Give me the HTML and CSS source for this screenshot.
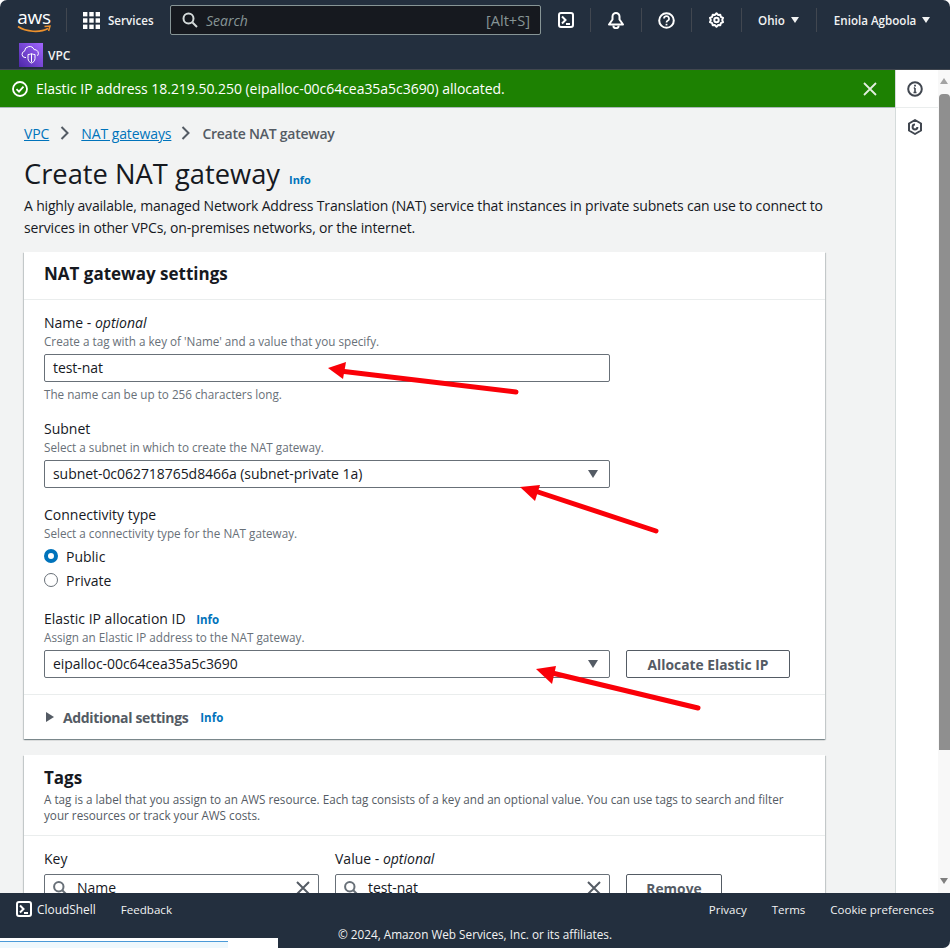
FILE: index.html
```html
<!DOCTYPE html>
<html lang="en">
<head>
<meta charset="utf-8">
<title>Create NAT gateway</title>
<link rel="stylesheet" href="styles.css">
</head>
<body>
<div class="page">
  <header class="topbar">
    <div class="row-main">
      <div class="logo">
        <span class="logo-text">aws</span>
        <svg class="logo-swoosh" width="34" height="9" viewBox="0 0 34 9"><path d="M1 1.500C9 7 23 8 31 3.500" fill="none" stroke="#ec912d" stroke-width="1.700"/><path d="M27.500 1.600 33 1 31.600 6" fill="none" stroke="#ec912d" stroke-width="1.500"/></svg>
      </div>
      <span class="vsep sep-logo"></span>
      <div class="services">
        <svg class="grid-ico" width="17" height="17" viewBox="0 0 17 17" fill="#fff"><rect width="4.400" height="4.400"/><rect x="6.300" width="4.400" height="4.400"/><rect x="12.600" width="4.400" height="4.400"/><rect y="6.300" width="4.400" height="4.400"/><rect x="6.300" y="6.300" width="4.400" height="4.400"/><rect x="12.600" y="6.300" width="4.400" height="4.400"/><rect y="12.600" width="4.400" height="4.400"/><rect x="6.300" y="12.600" width="4.400" height="4.400"/><rect x="12.600" y="12.600" width="4.400" height="4.400"/></svg>
        <span class="nav-text">Services</span>
      </div>
      <div class="search">
        <svg width="16" height="16" viewBox="0 0 16 16" fill="none" stroke="#d5dbdb" stroke-width="2"><circle cx="6.500" cy="6.500" r="5"/><path d="M10.500 10.500 15 15"/></svg>
        <span class="search-text">Search</span>
        <span class="search-key">[Alt+S]</span>
      </div>
      <svg class="nav-ico ico-shell" width="16" height="16" viewBox="0 0 16 16" fill="none" stroke="#fff" stroke-width="2"><rect x="1" y="1" width="14" height="14" rx="2"/><path d="M4 4.500 7.500 8 4 11.500M8 12h4"/></svg>
      <span class="vsep sep-a"></span>
      <svg class="nav-ico ico-bell" width="18" height="18" viewBox="0 0 18 18" fill="none" stroke="#fff" stroke-width="2"><path d="M2 13.500h14L12.500 8.500V5.500a3.500 3.500 0 0 0-7 0v3z" stroke-linejoin="round"/><path d="M6.300 14.500a2.700 2.700 0 0 0 5.400 0"/></svg>
      <span class="vsep sep-b"></span>
      <svg class="nav-ico ico-help" width="17" height="17" viewBox="0 0 17 17" fill="none" stroke="#fff" stroke-width="2"><circle cx="8.500" cy="8.500" r="7.300"/><path d="M6 6.600a2.500 2.500 0 1 1 3.600 2.200c-.8.400-1.100.8-1.100 1.700" stroke-width="1.700"/><path d="M8.500 11.800v1.600" stroke-width="1.800"/></svg>
      <span class="vsep sep-c"></span>
      <svg class="nav-ico ico-gear" width="17" height="17" viewBox="0 0 17 17" fill="none" stroke="#fff" stroke-width="2"><path d="M8.500 1.200 10 2.900l2.300-.2.600 2.200 2.100 1-.8 2.100.8 2.100-2.100 1-.6 2.200-2.300-.2-1.500 1.700L7 13.100l-2.300.2-.6-2.200-2.100-1 .8-2.100-.8-2.100 2.100-1 .6-2.200 2.300.2z" stroke-linejoin="round"/><circle cx="8.500" cy="8" r="2.200"/></svg>
      <span class="vsep sep-d"></span>
      <span class="nav-text region">Ohio</span><span class="caret"></span>
      <span class="vsep sep-e"></span>
      <span class="nav-text user">Eniola Agboola</span><span class="caret"></span>
    </div>
    <div class="row-service">
      <div class="vpc-ico">
        <svg width="24" height="24" viewBox="0 0 24 24" fill="none" stroke="#fff" stroke-width="1"><path d="M7 14.500H6a3.200 3.200 0 0 1-.5-6.300 5 5 0 0 1 9.600-1.600 3.800 3.800 0 0 1 3.400 6.200"/><path d="M9 11.500c1.500 0 3-.5 3.500-1 .5.500 2 1 3.500 1v4c0 2.500-2 4-3.500 4.500C11 19.500 9 18 9 15.500z"/><path d="M12.500 11v8"/></svg>
      </div>
      <span class="vpc-text">VPC</span>
    </div>
  </header>

  <div class="middle">
    <div class="main-col">
      <div class="banner">
        <div class="banner-left">
          <svg width="16" height="16" viewBox="0 0 16 16" fill="none" stroke="#fff" stroke-width="1.800"><circle cx="8" cy="8" r="7"/><path d="M4.500 8.200 7 10.700l4.500-5"/></svg>
          <span>Elastic IP address 18.219.50.250 (eipalloc-00c64cea35a5c3690) allocated.</span>
        </div>
        <svg class="banner-close" width="14" height="14" viewBox="0 0 14 14" stroke="#e3eedf" stroke-width="1.800"><path d="M1 1 13 13M13 1 1 13"/></svg>
      </div>

      <main class="content">
        <nav class="crumbs">
          <a class="link">VPC</a>
          <svg width="9" height="14" viewBox="0 0 9 14" fill="none" stroke="#545b64" stroke-width="2"><path d="M1.500 1 7.500 7l-6 6"/></svg>
          <a class="link">NAT gateways</a>
          <svg width="9" height="14" viewBox="0 0 9 14" fill="none" stroke="#545b64" stroke-width="2"><path d="M1.500 1 7.500 7l-6 6"/></svg>
          <span class="crumb-current">Create NAT gateway</span>
        </nav>
        <div class="title-row">
          <h1>Create NAT gateway</h1>
          <span class="info info-title">Info</span>
        </div>
        <p class="lead">A highly available, managed Network Address Translation (NAT) service that instances in private subnets can use to connect to services in other VPCs, on-premises networks, or the internet.</p>

        <section class="card">
          <h2 class="card-title">NAT gateway settings</h2>
          <div class="card-body">
            <div class="label">Name - <em>optional</em></div>
            <div class="hint">Create a tag with a key of 'Name' and a value that you specify.</div>
            <div class="field">test-nat</div>
            <div class="hint hint-below">The name can be up to 256 characters long.</div>

            <div class="label gap-subnet">Subnet</div>
            <div class="hint">Select a subnet in which to create the NAT gateway.</div>
            <div class="field select">subnet-0c062718765d8466a (subnet-private 1a)<span class="sel-caret"></span></div>

            <div class="label gap-conn">Connectivity type</div>
            <div class="hint">Select a connectivity type for the NAT gateway.</div>
            <div class="radio radio-first"><span class="dot on"></span>Public</div>
            <div class="radio"><span class="dot"></span>Private</div>

            <div class="label gap-eip">Elastic IP allocation ID <span class="info info-label">Info</span></div>
            <div class="hint">Assign an Elastic IP address to the NAT gateway.</div>
            <div class="eip-row">
              <div class="field select">eipalloc-00c64cea35a5c3690<span class="sel-caret"></span></div>
              <div class="btn btn-allocate">Allocate Elastic IP</div>
            </div>
          </div>
          <div class="expander">
            <span class="exp-caret"></span>
            <span class="exp-text">Additional settings</span>
            <span class="info">Info</span>
          </div>
        </section>

        <section class="card card-tags">
          <h2 class="tags-title">Tags</h2>
          <p class="tags-desc">A tag is a label that you assign to an AWS resource. Each tag consists of a key and an optional value. You can use tags to search and filter your resources or track your AWS costs.</p>
          <div class="tags-body">
            <div class="tag-col tag-key">
              <div class="label">Key</div>
              <div class="field tag-field">
                <svg width="14" height="14" viewBox="0 0 14 14" fill="none" stroke="#687078" stroke-width="2"><circle cx="5.800" cy="5.800" r="4.700"/><path d="M9.300 9.300 13.500 13.500"/></svg>
                <span>Name</span>
                <svg class="tag-x" width="14" height="14" viewBox="0 0 14 14" stroke="#545b64" stroke-width="2"><path d="M1 1 13 13M13 1 1 13"/></svg>
              </div>
            </div>
            <div class="tag-col tag-value">
              <div class="label">Value - <em>optional</em></div>
              <div class="field tag-field">
                <svg width="14" height="14" viewBox="0 0 14 14" fill="none" stroke="#687078" stroke-width="2"><circle cx="5.800" cy="5.800" r="4.700"/><path d="M9.300 9.300 13.500 13.500"/></svg>
                <span>test-nat</span>
                <svg class="tag-x" width="14" height="14" viewBox="0 0 14 14" stroke="#545b64" stroke-width="2"><path d="M1 1 13 13M13 1 1 13"/></svg>
              </div>
            </div>
            <div class="btn btn-remove">Remove</div>
          </div>
        </section>
      </main>
    </div>

    <aside class="side">
      <div class="side-item side-info">
        <svg width="16" height="16" viewBox="0 0 16 16" fill="none" stroke="#414750" stroke-width="2"><circle cx="8" cy="8" r="6.800"/><path d="M8 7v4.500M6.500 11.500h3M6.800 7H8" stroke-width="1.600"/><path d="M8 3.800v1.600" stroke-width="1.800"/></svg>
      </div>
      <div class="side-item side-hex">
        <svg width="14" height="16" viewBox="0 0 14 16" fill="none" stroke="#414750" stroke-width="2"><path d="M7 1 13 4.500v7L7 15l-6-3.500v-7z" stroke-linejoin="round"/><path d="M9.400 8A2.400 2.400 0 1 1 7 5.600"/></svg>
      </div>
    </aside>

    <div class="scrollbar">
      <span class="sb-up"></span>
      <span class="sb-thumb"></span>
      <span class="sb-down"></span>
    </div>
  </div>

  <footer class="footer">
    <div class="foot-row">
      <svg class="foot-shell" width="16" height="16" viewBox="0 0 16 16" fill="none" stroke="#fff" stroke-width="2"><rect x="1" y="1" width="14" height="14" rx="2"/><path d="M4 4.500 7.500 8 4 11.500M8 12h4"/></svg>
      <span class="foot-link foot-cloud">CloudShell</span>
      <span class="foot-link foot-feedback">Feedback</span>
      <span class="foot-spacer"></span>
      <span class="foot-link">Privacy</span>
      <span class="foot-link">Terms</span>
      <span class="foot-link">Cookie preferences</span>
    </div>
    <div class="copyright">© 2024, Amazon Web Services, Inc. or its affiliates.</div>
    <div class="artefact"><span class="artefact-line"></span><span class="artefact-white"></span></div>
  </footer>

  <svg class="arrows" width="950" height="948" viewBox="0 0 950 948" fill="#fa0008" stroke="#fa0008" stroke-width="5" stroke-linecap="round">
    <path d="M516 392 340 371" fill="none"/>
    <polygon points="328,368 346,362 343,379" stroke="none"/>
    <path d="M656 531 532 490" fill="none"/>
    <polygon points="520,487 540,485 535,501" stroke="none"/>
    <path d="M698 708 548 672" fill="none"/>
    <polygon points="536,669 556,666 552,684" stroke="none"/>
  </svg>
</div>
</body>
</html>
```
FILE: styles.css
```css
* { box-sizing: border-box; }
html, body { margin: 0; padding: 0; height: 100%; background: #fff; }
body { font-family: "Open Sans", "Noto Sans", sans-serif; color: #16191f; font-size: 14px; }
.page { position: relative; width: 950px; height: 948px; display: flex; flex-direction: column; overflow: hidden; border-radius: 7px 7px 7px 0; }

.topbar { height: 70px; flex: none; background: #232f3e; border-bottom: 1px solid #414750; }
.row-main { height: 40px; display: flex; align-items: center; color: #fff; }
.logo { width: 34px; height: 24px; margin: 0 0 0 17px; position: relative; flex: none; }
.logo-text { display: block; font-size: 19px; line-height: 18px; color: #fff; text-align: center; letter-spacing: -.2px; }
.logo-swoosh { position: absolute; left: 0; top: 17px; }
.vsep { width: 1px; height: 24px; background: #414750; flex: none; }
.sep-logo { margin-left: 15px; }
.services { display: flex; align-items: center; margin-left: 16px; width: 87px; flex: none; }
.grid-ico { flex: none; }
.nav-text { font-size: 11.600px; font-weight: 600; color: #f2f3f3; white-space: nowrap; }
.services .nav-text { margin-left: 8px; }
.search { width: 371px; height: 30px; flex: none; background: #16191f; border: 1px solid #879596; border-radius: 2px; display: flex; align-items: center; padding: 0 10px 0 11px; }
.search-text { margin-left: 8px; font-style: italic; color: #879596; font-size: 14px; flex: 1; }
.search-key { color: #879596; font-size: 14.600px; }
.nav-ico { flex: none; }
.ico-shell { margin-left: 17px; }
.sep-a { margin-left: 16px; }
.ico-bell { margin-left: 16px; }
.sep-b { margin-left: 16px; }
.ico-help { margin-left: 16px; }
.sep-c { margin-left: 16px; }
.ico-gear { margin-left: 16px; }
.sep-d { margin-left: 16px; }
.region { margin-left: 16px; }
.caret { width: 0; height: 0; border-left: 4px solid transparent; border-right: 4px solid transparent; border-top: 6px solid #f2f3f3; margin-left: 6px; flex: none; }
.sep-e { margin-left: 17px; }
.user { margin-left: 17px; }

.row-service { display: flex; align-items: center; height: 24px; margin-top: 3px; padding-left: 19px; }
.vpc-ico { width: 24px; height: 24px; background: linear-gradient(45deg, #4d27a8, #a166ff); flex: none; }
.vpc-text { margin-left: 5px; color: #f2f3f3; font-size: 12px; font-weight: 600; }

.middle { flex: 1; min-height: 0; display: flex; position: relative; overflow: hidden; }
.main-col { flex: 1; min-width: 0; display: flex; flex-direction: column; }
.banner { height: 38px; flex: none; background: #1d8102; color: #fff; border-bottom: 1px solid #aab7b8; display: flex; align-items: center; justify-content: space-between; padding: 0 18px 0 12px; font-size: 14px; font-weight: 500; letter-spacing: -.04px; }
.banner-left { display: flex; align-items: center; gap: 8px; }
.banner-left svg, .banner-close { flex: none; }

.content { flex: 1; min-height: 0; background: #f2f3f3; padding: 0 69px 0 24px; overflow: hidden; }
.side { width: 43px; flex: none; background: #fff; border-left: 1px solid #d5dbdb; }
.side-item { display: flex; justify-content: center; align-items: center; padding-right: 4px; }
.side-info { height: 38px; border-bottom: 1px solid #eaeded; }
.side-hex { height: 37px; }
.scrollbar { width: 12px; flex: none; background: #f8f8f8; position: relative; }
.sb-up, .sb-down { position: absolute; left: 2px; width: 0; height: 0; border-left: 4px solid transparent; border-right: 4px solid transparent; }
.sb-up { top: 8px; border-bottom: 6px solid #a3a3a3; }
.sb-down { bottom: 9px; border-top: 6px solid #7f7f7f; }
.sb-thumb { position: absolute; left: 1px; right: 0; top: 24px; height: 656px; background: #8f8f8f; border-radius: 4px 4px 0 0; }

.crumbs { display: flex; align-items: center; height: 20px; margin-top: 15px; font-size: 14px; }
.link { color: #0073bb; text-decoration: underline; letter-spacing: -.1px; }
.crumbs svg { margin: 0 12px 0 11px; }
.crumbs svg + a + svg { margin: 0 12px 0 10px; }
.crumb-current { color: #545b64; font-weight: 600; letter-spacing: -.25px; }

.title-row { display: flex; align-items: baseline; margin-top: 11px; }
h1 { font-size: 27.300px; font-weight: 400; line-height: 40px; margin: 0; color: #16191f; }
.info { color: #0073bb; font-size: 11.500px; font-weight: 700; }
.info-title { margin-left: 9px; font-size: 11px; }
.lead { margin: 1px 0 0; font-size: 14px; line-height: 22px; width: 801px; letter-spacing: -.17px; }

.card { width: 801px; background: #fff; margin-top: 13px; box-shadow: 0 1px 1px 0 rgba(0,28,36,.3), 1px 1px 1px 0 rgba(0,28,36,.15), -1px 1px 1px 0 rgba(0,28,36,.15); }
.card-title { margin: 0; height: 48px; padding: 9px 20px 0; border-bottom: 1px solid #eaeded; font-size: 17px; line-height: 26px; font-weight: 700; }
.card-body { padding: 12px 20px 16px; border-bottom: 1px solid #eaeded; }
.label { font-size: 14px; line-height: 22px; color: #16191f; }
.hint { font-size: 11.700px; line-height: 14px; color: #687078; margin-top: 0; }
.hint-below { margin-top: 5px; }
.field { width: 566px; height: 28px; border: 1px solid #687078; border-radius: 2px; margin-top: 6px; padding: 0 8px; font-size: 14px; line-height: 26px; background: #fff; position: relative; white-space: nowrap; letter-spacing: -.05px; }
.sel-caret { position: absolute; right: 11px; top: 9px; width: 0; height: 0; border-left: 5px solid transparent; border-right: 5px solid transparent; border-top: 8px solid #545b64; }
.gap-subnet { margin-top: 17px; }
.gap-conn { margin-top: 16px; }
.radio { display: flex; align-items: center; height: 24px; font-size: 14px; }
.radio-first { margin-top: 4px; }
.dot { width: 14px; height: 14px; border-radius: 50%; border: 1px solid #687078; margin-right: 8px; background: #fff; flex: none; }
.dot.on { border: 4px solid #0073bb; }
.gap-eip { margin-top: 16px; line-height: 21px; }
.info-label { margin-left: 7px; }
.eip-row { display: flex; align-items: center; margin-top: 6px; }
.eip-row .field { margin-top: 0; }
.btn { height: 28px; border: 1px solid #545b64; border-radius: 2px; color: #545b64; font-weight: 700; font-size: 13.800px; display: flex; align-items: center; justify-content: center; background: #fff; flex: none; }
.btn-allocate { width: 164px; margin-left: 16px; }
.expander { height: 44px; display: flex; align-items: center; padding-left: 22px; font-size: 14px; }
.exp-caret { width: 0; height: 0; border-top: 5px solid transparent; border-bottom: 5px solid transparent; border-left: 8px solid #545b64; }
.exp-text { margin-left: 9px; color: #545b64; font-weight: 700; letter-spacing: -.35px; }
.expander .info { margin-left: 12px; }

.card-tags { margin-top: 16px; padding-bottom: 40px; }
.tags-title { margin: 0; padding: 10px 20px 0; font-size: 17px; line-height: 26px; font-weight: 700; }
.tags-desc { margin: 0; padding: 0 20px 12px; font-size: 11.700px; line-height: 16px; color: #545b64; border-bottom: 1px solid #eaeded; }
.tags-body { display: flex; align-items: flex-end; padding: 12px 20px 0; }
.tag-key { width: 275px; }
.tag-value { width: 275px; margin-left: 16px; }
.tag-field { width: 100%; margin-top: 4px; display: flex; align-items: center; gap: 10px; }
.tag-x { margin-left: auto; flex: none; }
.tag-field svg { flex: none; }
.btn-remove { width: 96px; margin-left: 16px; }

.footer { height: 55px; flex: none; background: #232f3e; color: #f2f3f3; position: relative; z-index: 1; }
.foot-row { display: flex; align-items: center; height: 32px; padding: 0 16px; gap: 25px; font-size: 11.500px; }
.foot-shell { flex: none; }
.foot-cloud { margin-left: -20px; font-size: 11.900px; }
.foot-feedback { font-size: 11.600px; }
.foot-spacer { flex: 1; }
.foot-link { white-space: nowrap; font-weight: 500; }
.copyright { text-align: center; font-size: 11.750px; font-weight: 500; line-height: 18px; }
.artefact { position: absolute; left: 0; bottom: 0; width: 228px; height: 10px; background: #eef8fd; border-top: 3px solid #fff; }
.artefact-line { position: absolute; left: 0; right: 0; top: 0; height: 1px; background: #4a9ad8; }
.artefact-white { position: absolute; left: 228px; top: -3px; width: 50px; height: 10px; background: #fff; }

.arrows { position: absolute; left: 0; top: 0; z-index: 2; pointer-events: none; }
```
